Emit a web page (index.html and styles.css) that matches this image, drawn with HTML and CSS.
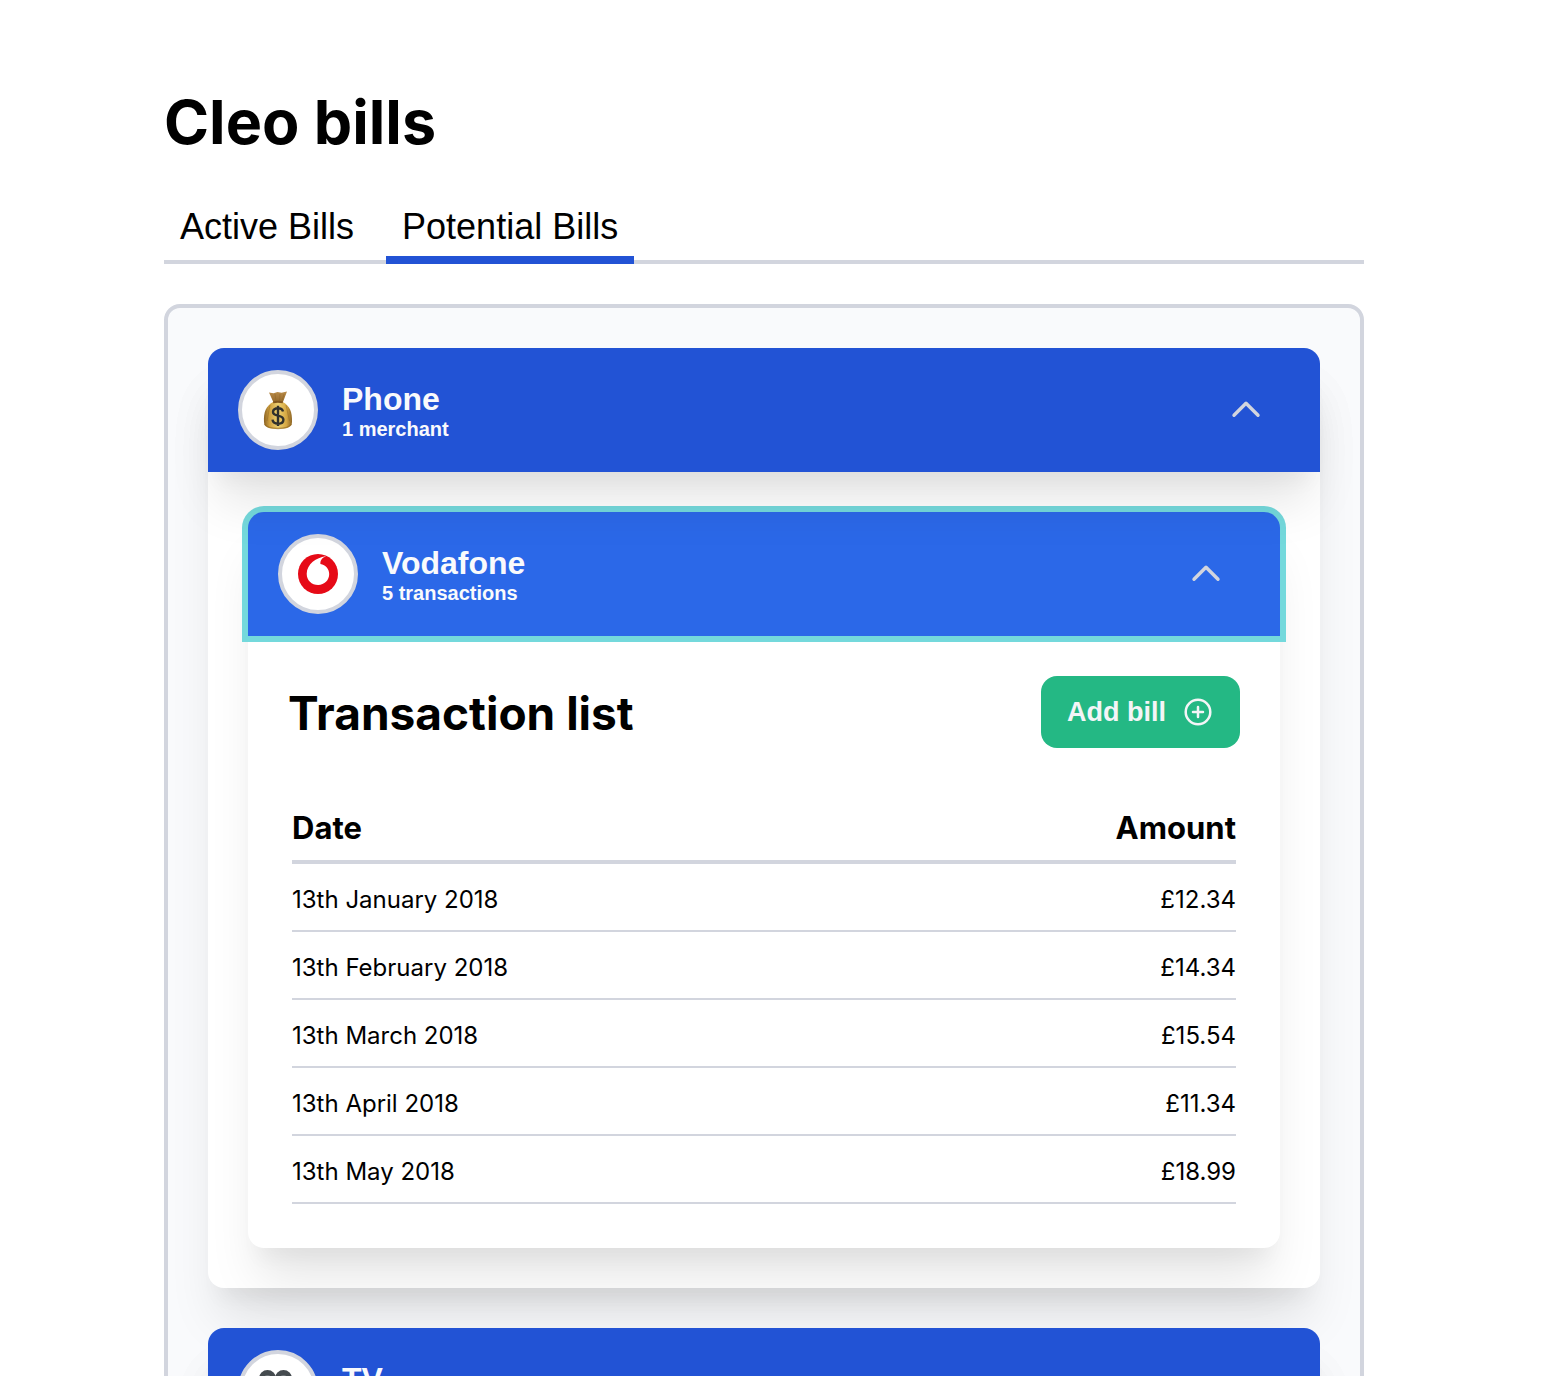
FILE: index.html
```html
<!DOCTYPE html>
<html lang="en">
<head>
  <meta charset="utf-8">
  <meta name="viewport" content="width=device-width, initial-scale=1">
  <title>Cleo bills</title>
  <link rel="stylesheet" href="styles.css">
</head>
<body>
  <main class="page">
    <h1 class="page-title">Cleo bills</h1>
    <nav class="tabs">
      <button type="button" class="tab">Active Bills</button>
      <button type="button" class="tab tab-active">Potential Bills</button>
    </nav>

    <div class="panel">
      <section class="card">
        <button type="button" class="card-header category" aria-expanded="true">
          <span class="avatar">
            <svg width="40" height="40" viewBox="0 0 40 40" aria-hidden="true">
              <defs>
                <linearGradient id="sack" x1="0" x2="1" y1="0" y2="0">
                  <stop offset="0" stop-color="#8a6224"/>
                  <stop offset="0.2" stop-color="#cfa03f"/>
                  <stop offset="0.5" stop-color="#edd071"/>
                  <stop offset="0.8" stop-color="#d6a843"/>
                  <stop offset="1" stop-color="#8c6425"/>
                </linearGradient>
                <linearGradient id="neck" x1="0" x2="0" y1="0" y2="1">
                  <stop offset="0" stop-color="#b98b49"/>
                  <stop offset="1" stop-color="#94682a"/>
                </linearGradient>
              </defs>
              <path d="M11 2.500l4.500 .7 4-1.200 4 .8 5.500-1.300-4.200 11h-9.300z" fill="url(#neck)"/>
              <path d="M15 12C8 16 5.500 22 6 32c.2 5 4 6.800 14 6.800s13.800-1.800 14-6.800c.3-10-2-16-9.200-20z" fill="url(#sack)"/>
              <path d="M6.500 34c2 3.500 7 4.500 13.500 4.500s11.500-1 13.500-4.500" fill="none" stroke="#94691f" stroke-width="1.500" opacity=".65"/>
              <path d="M12 15l-3 16M28 15l3.500 16M17 4l1 7M22 4l-.5 7M26 4l-2 7" stroke="#8d6424" stroke-width="1" opacity=".45" fill="none"/>
              <path d="M15 11.500q5-1.500 10 0l-.3 1.800q-5-1.200-9.500 0z" fill="#81561f"/>
              <path d="M25 21.500c-.5-2.300-2.400-3.300-5-3.300-3 0-5 1.300-5 3.700 0 5.200 10.400 2.400 10.400 7.800 0 2.600-2.200 4-5.400 4-3.100 0-5.200-1.300-5.500-4M20 15.800v20.300" fill="none" stroke="#30302c" stroke-width="2.400"/>
            </svg>
          </span>
          <span class="card-text">
            <span class="card-name">Phone</span>
            <span class="card-note">1 merchant</span>
          </span>
          <svg class="chevron" viewBox="0 0 24 24" aria-hidden="true"><path d="M6 14.600l6-6 6 6"/></svg>
        </button>

        <div class="card-body">
          <section class="card">
            <button type="button" class="card-header merchant" aria-expanded="true">
              <span class="avatar">
                <svg width="40" height="40" viewBox="0 0 40 40" aria-hidden="true">
                  <circle cx="20" cy="20" r="20" fill="#e60a17"/>
                  <path d="M27.500 2.200C18.500 3.500 8.700 10 8.700 19.800 8.700 26.500 13.500 31 20.200 31c6.200 0 11-4.700 11-10.900 0-5.300-3.400-9.100-8.800-10.200-.2-3.800 1.900-6.600 5.400-7.500z" fill="#fff"/>
                </svg>
              </span>
              <span class="card-text">
                <span class="card-name">Vodafone</span>
                <span class="card-note">5 transactions</span>
              </span>
              <svg class="chevron" viewBox="0 0 24 24" aria-hidden="true"><path d="M6 14.600l6-6 6 6"/></svg>
            </button>

            <div class="card-body">
              <div class="list-head">
                <h2 class="list-title">Transaction list</h2>
                <button type="button" class="add-button">
                  Add bill
                  <svg width="32" height="32" viewBox="0 0 32 32" aria-hidden="true"><circle cx="16" cy="16" r="12.300"/><path d="M16 11v10M11 16h10"/></svg>
                </button>
              </div>
              <table class="transactions">
                <thead>
                  <tr><th scope="col">Date</th><th scope="col">Amount</th></tr>
                </thead>
                <tbody>
                  <tr><td>13th January 2018</td><td>£12.34</td></tr>
                  <tr><td>13th February 2018</td><td>£14.34</td></tr>
                  <tr><td>13th March 2018</td><td>£15.54</td></tr>
                  <tr><td>13th April 2018</td><td>£11.34</td></tr>
                  <tr><td>13th May 2018</td><td>£18.99</td></tr>
                </tbody>
              </table>
            </div>
          </section>
        </div>
      </section>

      <section class="card">
        <button type="button" class="card-header category" aria-expanded="false">
          <span class="avatar">
            <svg width="40" height="40" viewBox="0 0 40 40" aria-hidden="true">
              <circle cx="9.500" cy="8.500" r="8.500" fill="#454b4f"/>
              <circle cx="25.500" cy="8.500" r="8.500" fill="#454b4f"/>
              <circle cx="9.500" cy="8.500" r="3.500" fill="#70767a"/>
              <circle cx="25.500" cy="8.500" r="3.500" fill="#70767a"/>
              <rect x="3" y="17" width="26" height="19" rx="2" fill="#454b4f"/>
              <path d="M29 24l9-5v15l-9-5z" fill="#333839"/>
            </svg>
          </span>
          <span class="card-text">
            <span class="card-name">TV</span>
            <span class="card-note">1 merchant</span>
          </span>
          <svg class="chevron" viewBox="0 0 24 24" aria-hidden="true"><path d="M6 9.400l6 6 6-6"/></svg>
        </button>
      </section>
    </div>
  </main>
</body>
</html>
```
FILE: styles.css
```css
* {
  box-sizing: border-box;
}

body {
  margin: 0;
  height: 100vh;
  overflow-y: auto;
  scrollbar-width: none;
  background: #fff;
  color: #000;
  font-family: Inter, sans-serif;
  font-size: 24px;
  line-height: 32px;
}

button {
  margin: 0;
  border: 0;
  font-family: "Liberation Sans", Arial, sans-serif;
  cursor: pointer;
}

.page {
  padding: 82px 190px 80px 164px;
}

.page-title {
  margin: 0 0 38px;
  font-size: 61px;
  line-height: 80px;
  font-weight: 700;
}

.tabs {
  display: flex;
  gap: 16px;
  margin-bottom: 40px;
  box-shadow: inset 0 -4px #d2d5de;
}

.tab {
  padding: 0 16px 2px;
  border-bottom: 8px solid transparent;
  background: none;
  color: #000;
  font-size: 36px;
  line-height: 54px;
}

.tab-active {
  border-bottom-color: #2253d5;
}

.panel {
  display: flex;
  flex-direction: column;
  gap: 40px;
  padding: 40px;
  border: 4px solid #d2d5de;
  border-radius: 16px;
  background: #f9fafc;
}

.card {
  border-radius: 16px;
  background: #fff;
  box-shadow: 0 40px 50px -10px rgba(0, 0, 0, 0.1), 0 20px 20px -10px rgba(0, 0, 0, 0.04);
}

.card-header {
  position: relative;
  display: flex;
  align-items: center;
  gap: 24px;
  width: 100%;
  padding: 22px 50px 22px 30px;
  border-radius: 16px;
  color: #f9fafc;
  text-align: left;
}

.card-header[aria-expanded="true"] {
  border-radius: 16px 16px 0 0;
}

.category {
  z-index: 1;
  background: #2253d5;
  box-shadow: 0 40px 50px -10px rgba(0, 0, 0, 0.1), 0 20px 20px -10px rgba(0, 0, 0, 0.04);
}

.merchant {
  background: #2b68e8;
  box-shadow: 0 0 0 6px #74d9dc;
}

.avatar {
  display: flex;
  align-items: center;
  justify-content: center;
  width: 80px;
  height: 80px;
  border: 4px solid #d2d5de;
  border-radius: 50%;
  background: #fff;
}

.card-text {
  display: flex;
  flex: 1;
  flex-direction: column;
  padding-bottom: 2px;
  font-weight: 700;
}

.card-name {
  font-size: 32px;
  line-height: 40px;
}

.card-note {
  font-size: 20px;
  line-height: 20px;
}

.chevron {
  width: 48px;
  height: 48px;
  fill: none;
  stroke: #d2d5de;
  stroke-width: 1.7;
  stroke-linecap: round;
  stroke-linejoin: round;
}

.card-body {
  padding: 40px;
}

.list-head {
  display: flex;
  align-items: center;
  justify-content: space-between;
  margin-bottom: 58px;
}

.list-title {
  margin: 0;
  padding-top: 2px;
  font-size: 46px;
  line-height: 64px;
  font-weight: 700;
}

.add-button {
  display: flex;
  align-items: center;
  gap: 16px;
  padding: 20px 26px;
  border-radius: 16px;
  background: #24b884;
  color: #f4f5f7;
  font-size: 27px;
  line-height: 32px;
  font-weight: 700;
}

.add-button svg {
  fill: none;
  stroke: #f4f5f7;
  stroke-width: 2.5;
  stroke-linecap: round;
}

.transactions {
  width: calc(100% - 8px);
  margin: 0 4px 4px;
  border-collapse: separate;
  border-spacing: 0;
}

.transactions th {
  padding: 2px 0 12px;
  border-bottom: 4px solid #d2d5de;
  font-size: 31px;
  line-height: 40px;
  font-weight: 700;
  text-align: left;
}

.transactions td {
  padding: 20px 0 14px;
  border-bottom: 2px solid #d2d5de;
}

.transactions th:last-child,
.transactions td:last-child {
  text-align: right;
}
```
